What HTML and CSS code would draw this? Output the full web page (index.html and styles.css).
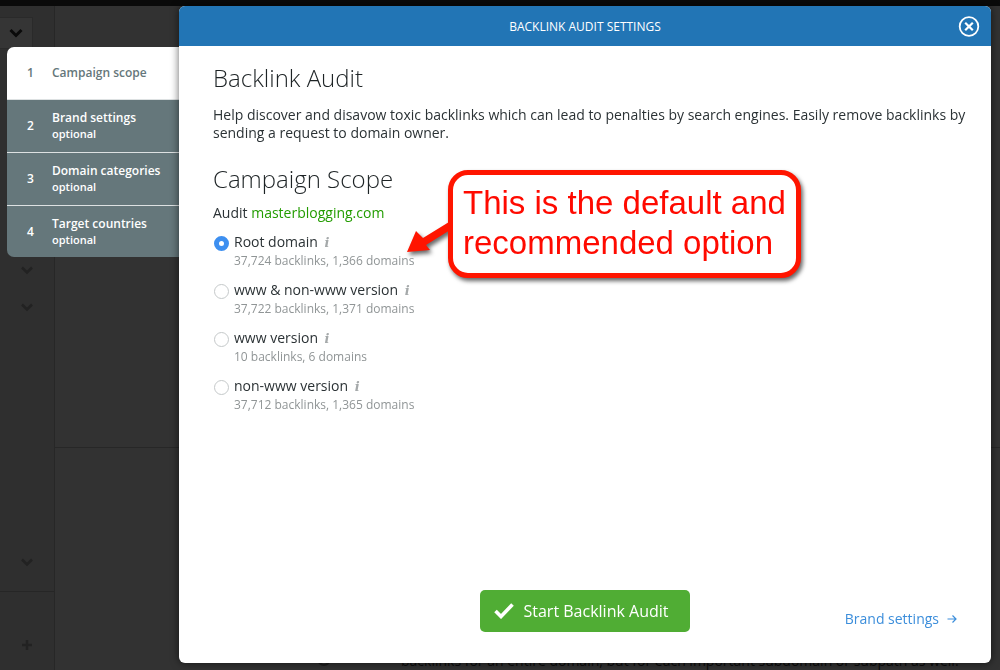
FILE: index.html
```html
<!DOCTYPE html>
<html lang="en">
<head>
  <meta charset="UTF-8">
  <meta name="viewport" content="width=device-width, initial-scale=1.0">
  <title>Backlink Audit Settings</title>
  <link rel="stylesheet" href="styles.css">
</head>
<body>

<!-- dimmed page behind the modal -->
<div class="page">
  <div class="topbar"></div>
  <div class="page-body">
    <div class="sidebar">
      <div class="sidebar-toggle">
        <svg width="14" height="10" viewBox="0 0 14 10"><path d="M1.5 2 L7 7.5 L12.5 2" fill="none" stroke="#0a0a0a" stroke-width="3"/></svg>
      </div>
      <div class="sidebar-group">
        <svg width="12" height="9" viewBox="0 0 12 9"><path d="M1 1.5 L6 6.5 L11 1.5" fill="none" stroke="#222" stroke-width="2.5"/></svg>
        <svg width="12" height="9" viewBox="0 0 12 9"><path d="M1 1.5 L6 6.5 L11 1.5" fill="none" stroke="#222" stroke-width="2.5"/></svg>
      </div>
      <div class="sidebar-last">
        <svg width="12" height="9" viewBox="0 0 12 9"><path d="M1 1.5 L6 6.5 L11 1.5" fill="none" stroke="#222" stroke-width="2.5"/></svg>
      </div>
      <div class="sidebar-add">
        <svg width="12" height="12" viewBox="0 0 12 12"><path d="M6 1 V11 M1 6 H11" fill="none" stroke="#222" stroke-width="2.5"/></svg>
      </div>
    </div>
    <div class="page-main">
      <div class="page-block"></div>
      <div class="page-note">
        <span class="page-radio"></span>
        <p>backlinks for an entire domain, but for each important subdomain or subpath as well.</p>
      </div>
    </div>
  </div>
</div>

<div class="modal">
  <ol class="steps">
    <li class="step active"><span class="num">1</span><span class="name">Campaign scope</span></li>
    <li class="step"><span class="num">2</span><span class="name">Brand settings<small>optional</small></span></li>
    <li class="step"><span class="num">3</span><span class="name">Domain categories<small>optional</small></span></li>
    <li class="step"><span class="num">4</span><span class="name">Target countries<small>optional</small></span></li>
  </ol>

  <div class="dialog">
    <div class="dialog-header">
      <span class="dialog-title">BACKLINK AUDIT SETTINGS</span>
      <button class="close" type="button" aria-label="Close">
        <svg width="22" height="22" viewBox="0 0 22 22"><circle cx="11" cy="11.5" r="9.3" fill="none" stroke="#fff" stroke-width="1.8"/><path d="M7.2 7.7 L14.8 15.3 M14.8 7.7 L7.2 15.3" stroke="#fff" stroke-width="2.2"/></svg>
      </button>
    </div>

    <div class="dialog-body">
      <h1>Backlink Audit</h1>
      <p class="intro">Help discover and disavow toxic backlinks which can lead to penalties by search engines. Easily remove backlinks by sending a request to domain owner.</p>

      <h2>Campaign Scope</h2>
      <p class="audit">Audit <span class="domain">masterblogging.com</span></p>

      <div class="scope-area">
        <div class="options">
          <div class="option">
            <input type="radio" name="scope" id="root" checked>
            <label for="root">Root domain <i class="info">i</i><small>37,724 backlinks, 1,366 domains</small></label>
          </div>
          <div class="option">
            <input type="radio" name="scope" id="both">
            <label for="both">www &amp; non-www version <i class="info">i</i><small>37,722 backlinks, 1,371 domains</small></label>
          </div>
          <div class="option">
            <input type="radio" name="scope" id="www">
            <label for="www">www version <i class="info">i</i><small>10 backlinks, 6 domains</small></label>
          </div>
          <div class="option">
            <input type="radio" name="scope" id="nonwww">
            <label for="nonwww">non-www version <i class="info">i</i><small>37,712 backlinks, 1,365 domains</small></label>
          </div>
        </div>

        <!-- annotation over the options -->
        <div class="callout">
          <svg class="arrow" width="50" height="44" viewBox="0 0 50 44"><path d="M44 8 L18 24 L11 17 L2 38 L25 36 L21 31 L50 13 Z" fill="#ff1500"/></svg>
          <div class="callout-box">This is the default and<br>recommended option</div>
        </div>
      </div>
    </div>

    <div class="dialog-footer">
      <button class="start" type="button">
        <svg width="20" height="16" viewBox="0 0 20 16"><path d="M1.5 8 L7 13.5 L18.5 1.5" fill="none" stroke="#fff" stroke-width="3.6"/></svg>
        Start Backlink Audit
      </button>
      <a class="next" href="#">Brand settings
        <svg width="10" height="10" viewBox="0 0 10 10"><path d="M0.5 5 H8.5 M5.5 1.5 L9 5 L5.5 8.5" fill="none" stroke="#3c8edb" stroke-width="1.2"/></svg>
      </a>
    </div>
  </div>
</div>

</body>
</html>
```
FILE: styles.css
```css
* {
  box-sizing: border-box;
}
body {
  margin: 0;
  height: 100vh;
  overflow: hidden;
  font-family: "Open Sans", "Noto Sans", sans-serif;
  font-size: 14px;
  color: #2b3235;
  background-color: #323232;
}
h1, h2, p, ol {
  margin: 0;
  padding: 0;
}

/* page under the overlay */
.page {
  display: flex;
  flex-direction: column;
  height: 100vh;
}
.topbar {
  height: 6px;
  background: #0a0a0a;
}
.page-body {
  flex: 1;
  display: flex;
}
.sidebar {
  display: flex;
  flex-direction: column;
  width: 55px;
  padding-top: 11px;
  background: #2f2f2f;
  border-right: 1px solid #272727;
}
.sidebar svg {
  display: block;
}
.sidebar-toggle {
  width: 33px;
  height: 32px;
  padding: 10px 0 0 9px;
  background: #353535;
  border: 1px solid #2a2a2a;
  border-left: 0;
}
.sidebar-group {
  display: flex;
  flex-direction: column;
  align-items: center;
  gap: 28px;
  flex: 1;
  padding-top: 217px;
}
.sidebar-last {
  display: flex;
  justify-content: center;
  padding-bottom: 24px;
  border-bottom: 1px solid #262626;
}
.sidebar-add {
  display: flex;
  justify-content: center;
  padding: 47px 0 19px;
}
.page-main {
  flex: 1;
  display: flex;
  flex-direction: column;
  justify-content: space-between;
}
.page-block {
  height: 442px;
  border-bottom: 1px solid #272727;
}
.page-note {
  display: flex;
  gap: 70px;
  padding-left: 262px;
  line-height: 18px;
  color: #0c0c0c;
  white-space: nowrap;
}
.page-radio {
  width: 14px;
  height: 14px;
  border: 2px solid #1c1c1c;
  border-radius: 50%;
}

/* modal */
.modal {
  position: fixed;
  inset: 0;
  display: flex;
  align-items: flex-start;
  padding: 6px 9px 7px 7px;
}
.steps {
  width: 172px;
  margin-top: 41px;
  list-style: none;
  border-radius: 7px 0 0 7px;
  overflow: hidden;
}
.step {
  display: flex;
  align-items: center;
  height: 53px;
  padding-left: 20px;
  color: #fff;
  background: #65777b;
  border-bottom: 1px solid #dde1e2;
  font-size: 12px;
  font-weight: 600;
  line-height: 16px;
}
.step:last-child {
  height: 51px;
  border-bottom: 0;
}
.step.active {
  background: #fff;
  color: #65777b;
}
.num {
  width: 25px;
}
.step small {
  display: block;
  font-size: 11px;
}
.dialog {
  position: relative;
  flex: 1;
  align-self: stretch;
  display: flex;
  flex-direction: column;
  background: #fff;
  border-radius: 6px;
  box-shadow: 0 0 8px rgba(0, 0, 0, 0.6);
}
.dialog-header {
  display: flex;
  align-items: center;
  height: 40px;
  padding: 0 11px 0 33px;
  background: #2275b5;
  border-radius: 6px 6px 0 0;
  color: #fff;
  font-size: 12px;
}
.dialog-title {
  flex: 1;
  text-align: center;
}
.close {
  width: 22px;
  height: 22px;
  padding: 0;
  border: none;
  background: none;
  cursor: pointer;
}
.close svg {
  display: block;
}
.dialog-body {
  flex: 1;
  padding: 16px 20px 0 34px;
}
h1, h2 {
  font-size: 24px;
  font-weight: 300;
  line-height: 32px;
  color: #1d2325;
}
.intro {
  margin-top: 12px;
  line-height: 18px;
}
h2 {
  margin-top: 21px;
}
.audit {
  margin-top: 8px;
  line-height: 20px;
}
.domain {
  color: #239c00;
}
.scope-area {
  position: relative;
  margin-top: 9px;
}
.option {
  display: flex;
  gap: 5px;
  height: 48px;
  padding-left: 1px;
}
.option input {
  appearance: none;
  width: 15px;
  height: 15px;
  margin: 4px 0 0;
  border: 1px solid #c4c8c9;
  border-radius: 50%;
  background: #fff;
}
.option input:checked {
  border: 5px solid #3d8ff0;
}
.option label {
  line-height: 20px;
}
.option small {
  display: block;
  font-size: 12px;
  line-height: 18px;
  color: #909596;
}
.info {
  margin-left: 3px;
  font-family: "DejaVu Serif", serif;
  font-weight: bold;
  font-size: 13px;
  line-height: 1;
  color: #a5a9aa;
}

/* red callout */
.callout {
  position: absolute;
  top: -62px;
  left: 192px;
  filter: drop-shadow(2px 3px 2px rgba(0, 0, 0, 0.6));
}
.arrow {
  position: absolute;
  top: 44px;
  left: 0;
}
.callout-box {
  position: relative;
  margin-left: 43px;
  padding: 8px 10px 10px;
  border: 5px solid #ff1500;
  border-radius: 20px;
  background: #fff;
  color: #ff0a00;
  font-family: "Liberation Sans", Arial, sans-serif;
  font-size: 33px;
  line-height: 40px;
  white-space: nowrap;
}

.dialog-footer {
  position: relative;
  display: flex;
  justify-content: center;
  padding-bottom: 31px;
}
.start {
  display: flex;
  align-items: center;
  gap: 10px;
  height: 42px;
  padding: 0 22px 0 14px;
  border: none;
  border-radius: 5px;
  background: #50ad34;
  color: #fff;
  font-family: inherit;
  font-size: 16px;
  cursor: pointer;
}
.next {
  position: absolute;
  right: 34px;
  bottom: 34px;
  display: flex;
  align-items: center;
  gap: 8px;
  line-height: 20px;
  color: #3c8edb;
  text-decoration: none;
}
```
